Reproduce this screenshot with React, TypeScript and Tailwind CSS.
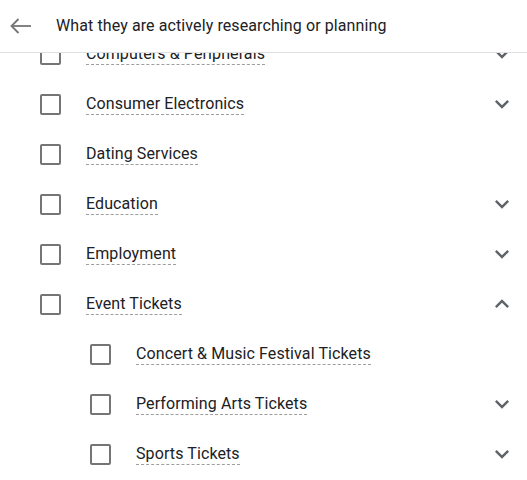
type Item = { label: string; child?: boolean; chevron?: 'down' | 'up' }

const items: Item[] = [
  { label: 'Computers & Peripherals', chevron: 'down' },
  { label: 'Consumer Electronics', chevron: 'down' },
  { label: 'Dating Services' },
  { label: 'Education', chevron: 'down' },
  { label: 'Employment', chevron: 'down' },
  { label: 'Event Tickets', chevron: 'up' },
  { label: 'Concert & Music Festival Tickets', child: true },
  { label: 'Performing Arts Tickets', child: true, chevron: 'down' },
  { label: 'Sports Tickets', child: true, chevron: 'down' },
]

const Chevron = ({ up }: { up?: boolean }) => (
  <svg viewBox="0 0 24 24" className={`h-7 w-7 fill-[#5f6368] ${up ? 'rotate-180' : ''}`}>
    <path d="M16.59 8.59L12 13.17 7.41 8.59 6 10l6 6 6-6z" />
  </svg>
)

const Row = ({ item }: { item: Item }) => (
  <div className={`flex h-[50px] items-center pr-[11px] ${item.child ? 'pl-[90px]' : 'pl-[40px]'}`}>
    <div className="h-[21px] w-[21px] shrink-0 rounded-[2px] border-2 border-[#757575]" />
    <div className="ml-[25px] flex-1">
      <span className="border-b border-dashed border-[#9e9e9e] pb-[1px] text-[16px] tracking-[0.1px] text-[#202124]">
        {item.label}
      </span>
    </div>
    {item.chevron === 'down' && <Chevron />}
    {item.chevron === 'up' && <Chevron up />}
  </div>
)

export default function App() {
  return (
    <div className="relative h-[480px] w-[527px] overflow-hidden bg-white" style={{ fontFamily: 'Roboto, sans-serif' }}>
      {/* sticky header over the scrolled list */}
      <div className="absolute inset-x-0 top-0 z-10 flex h-[53px] items-center border-b border-[#e0e0e0] bg-white">
        <svg viewBox="0 0 22 16" className="ml-[10px] h-4 w-[22px]" fill="none" stroke="#757575" strokeWidth={1.8}>
          <path d="M21 8H1.5" />
          <path d="M8.5 1L1.5 8l7 7" />
        </svg>
        <span className="ml-[24px] text-[16px] tracking-[0.1px] text-[#202124]">
          What they are actively researching or planning
        </span>
      </div>

      <div className="pt-[29px]">
        {items.map((item, i) => (
          <Row key={i} item={item} />
        ))}
      </div>
    </div>
  )
}
